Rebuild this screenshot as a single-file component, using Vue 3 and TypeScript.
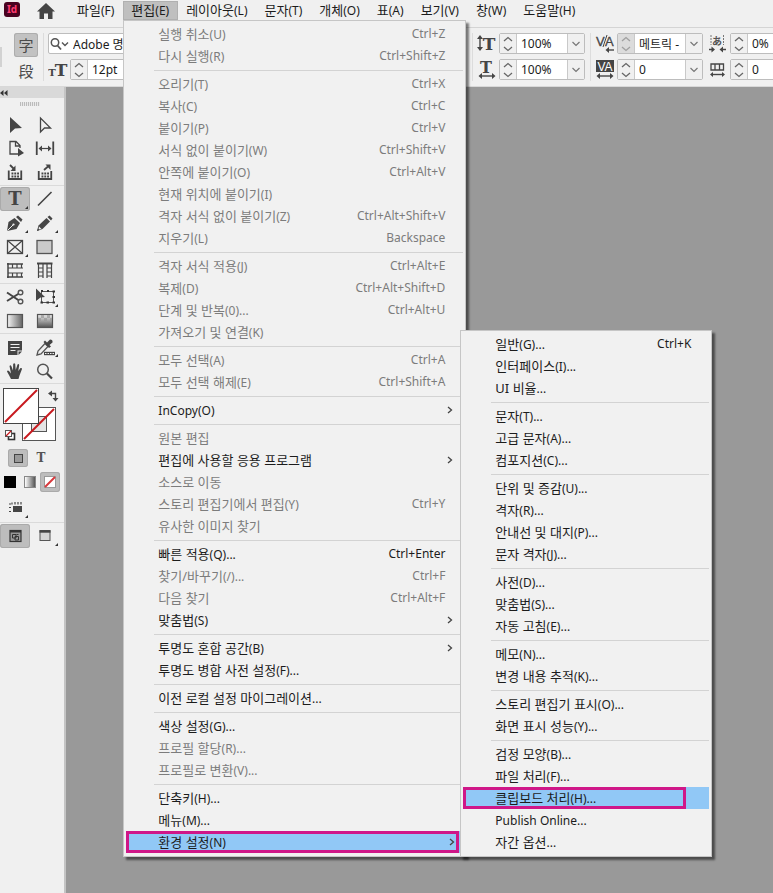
<script setup lang="ts">
interface MenuItem {
  label: string
  tail?: string
  keys?: string
  off?: boolean
  sub?: boolean
  active?: boolean
}

const on = (label: string, tail = '', keys = ''): MenuItem => ({ label, tail, keys })
const off = (label: string, tail = '', keys = ''): MenuItem => ({ label, tail, keys, off: true })
const parent = (label: string, tail = '', active = false): MenuItem => ({ label, tail, sub: true, active })

const editMenu: MenuItem[][] = [
  [off('실행 취소', '(U)', 'Ctrl+Z'), off('다시 실행', '(R)', 'Ctrl+Shift+Z')],
  [
    off('오리기', '(T)', 'Ctrl+X'),
    off('복사', '(C)', 'Ctrl+C'),
    off('붙이기', '(P)', 'Ctrl+V'),
    off('서식 없이 붙이기', '(W)', 'Ctrl+Shift+V'),
    off('안쪽에 붙이기', '(O)', 'Ctrl+Alt+V'),
    off('현재 위치에 붙이기', '(I)'),
    off('격자 서식 없이 붙이기', '(Z)', 'Ctrl+Alt+Shift+V'),
    off('지우기', '(L)', 'Backspace'),
  ],
  [
    off('격자 서식 적용', '(J)', 'Ctrl+Alt+E'),
    off('복제', '(D)', 'Ctrl+Alt+Shift+D'),
    off('단계 및 반복', '(0)...', 'Ctrl+Alt+U'),
    off('가져오기 및 연결', '(K)'),
  ],
  [off('모두 선택', '(A)', 'Ctrl+A'), off('모두 선택 해제', '(E)', 'Ctrl+Shift+A')],
  [parent('', 'InCopy(O)')],
  [
    off('원본 편집'),
    parent('편집에 사용할 응용 프로그램'),
    off('소스로 이동'),
    off('스토리 편집기에서 편집', '(Y)', 'Ctrl+Y'),
    off('유사한 이미지 찾기'),
  ],
  [
    on('빠른 적용', '(Q)...', 'Ctrl+Enter'),
    off('찾기/바꾸기', '(/)...', 'Ctrl+F'),
    off('다음 찾기', '', 'Ctrl+Alt+F'),
    parent('맞춤법', '(S)'),
  ],
  [parent('투명도 혼합 공간', '(B)'), on('투명도 병합 사전 설정', '(F)...')],
  [on('이전 로컬 설정 마이그레이션', '...')],
  [on('색상 설정', '(G)...'), off('프로필 할당', '(R)...'), off('프로필로 변환', '(V)...')],
  [on('단축키', '(H)...'), on('메뉴', '(M)...'), parent('환경 설정', '(N)', true)],
]

const prefsMenu: MenuItem[][] = [
  [on('일반', '(G)...', 'Ctrl+K'), on('인터페이스', '(I)...'), on('UI 비율', '...')],
  [on('문자', '(T)...'), on('고급 문자', '(A)...'), on('컴포지션', '(C)...')],
  [on('단위 및 증감', '(U)...'), on('격자', '(R)...'), on('안내선 및 대지', '(P)...'), on('문자 격자', '(J)...')],
  [on('사전', '(D)...'), on('맞춤법', '(S)...'), on('자동 고침', '(E)...')],
  [on('메모', '(N)...'), on('변경 내용 추적', '(K)...')],
  [on('스토리 편집기 표시', '(O)...'), on('화면 표시 성능', '(Y)...')],
  [
    on('검정 모양', '(B)...'),
    on('파일 처리', '(F)...'),
    { label: '클립보드 처리', tail: '(H)...', active: true },
    on('', 'Publish Online...'),
    on('자간 옵션', '...'),
  ],
]

const menusBefore = [{ label: '파일', key: '(F)' }]
const menusAfter = [
  { label: '레이아웃', key: '(L)' },
  { label: '문자', key: '(T)' },
  { label: '개체', key: '(O)' },
  { label: '표', key: '(A)' },
  { label: '보기', key: '(V)' },
  { label: '창', key: '(W)' },
  { label: '도움말', key: '(H)' },
]

interface Tool {
  name: string
  art: string
  more?: boolean
  active?: boolean
}

const letterT = (x: number, y: number, size: number) =>
  `<text x="${x}" y="${y}" font-family="DejaVu Serif, serif" font-weight="700" font-size="${size}" text-anchor="middle" fill="#454545">T</text>`

const toolGroups: Tool[][] = [
  [
    { name: '선택 도구', art: '<path d="M10 4L22 15L15 15.5L10 20Z" fill="#454545"/>' },
    { name: '직접 선택 도구', art: '<path d="M10.5 5V19L14.5 15H20.5Z" fill="none" stroke="#454545" stroke-width="1.3"/>' },
    {
      name: '페이지 도구',
      art: '<path d="M18 17H10V4.500H16L20 8.500V11M15.500 5V9H20" fill="none" stroke="#454545" stroke-width="1.300"/><path d="M18 11L24 16L18 19.500Z" fill="#454545"/>',
    },
    {
      name: '간격 도구',
      art: '<path d="M6.750 4.500V18M23.250 4.500V18" stroke="#454545" stroke-width="1.800"/><path d="M10 11.500H20" stroke="#454545" stroke-width="1.200"/><path d="M8.500 11.500L12 8.500V14.500ZM21.500 11.500L18 8.500V14.500Z" fill="#454545"/>',
    },
    {
      name: '내용 수집 도구',
      art: '<path d="M8.750 9.500V18H21.250V9.500" fill="none" stroke="#454545" stroke-width="1.800"/><path d="M11.500 12.500H19M11.500 15.500H19" stroke="#454545" stroke-width="1.800" stroke-dasharray="1.900 .9"/><path d="M10 4L13.500 7.500" stroke="#454545" stroke-width="1.800"/><path d="M15.500 4.500V10H10.500Z" fill="#454545"/>',
    },
    {
      name: '내용 배치 도구',
      art: '<path d="M8.750 10V18H21.250V10" fill="none" stroke="#454545" stroke-width="1.800"/><path d="M11.500 12.500H19M11.500 15.500H19" stroke="#454545" stroke-width="1.800" stroke-dasharray="1.900 .9"/><path d="M14 9L18 5.500" stroke="#454545" stroke-width="1.800"/><path d="M15.500 3.500H20.500V9Z" fill="#454545"/>',
    },
  ],
  [
    { name: '문자 도구', art: letterT(15, 18, 18), more: true, active: true },
    { name: '선 도구', art: '<path d="M8 18.500L21.500 5" stroke="#454545" stroke-width="1.600"/>' },
    {
      name: '펜 도구',
      art: '<path d="M7 20L8.500 11L14.500 7L20 12L16.500 18Z" fill="#454545"/><path d="M16 6L18 4.500L22.500 8.500L21 11Z" fill="#454545"/><path d="M7.500 19.500L13 14" stroke="#efefef" stroke-width="1"/><circle cx="13.500" cy="13.500" r="1.100" fill="#efefef"/>',
      more: true,
    },
    {
      name: '연필 도구',
      art: '<path d="M7 20L8.500 14.500L16.500 7L20 10.500L12.500 18Z" fill="#454545"/><path d="M17.500 6L19.500 4.500L22.500 7.500L21 9.500Z" fill="#454545"/><path d="M9 15.500L11.500 18L8.500 18.500Z" fill="#efefef"/><path d="M7 20L8 17.500L9.500 19Z" fill="#454545"/>',
      more: true,
    },
    {
      name: '사각형 프레임 도구',
      art: '<rect x="7.500" y="5.500" width="15" height="13" fill="none" stroke="#454545" stroke-width="1.300"/><path d="M7.500 5.500L22.500 18.500M22.500 5.500L7.500 18.500" stroke="#454545" stroke-width="1.200"/>',
      more: true,
    },
    { name: '사각형 도구', art: '<rect x="7" y="5.500" width="15" height="13" fill="#cbcbcb" stroke="#555" stroke-width="1.300"/>', more: true },
    {
      name: '가로 격자 도구',
      art: '<path d="M8 4V19M7 5H23M7 18H23" stroke="#454545" stroke-width="1.500" fill="none"/><path d="M8 9H23M8 14H23M12.500 5V9M17 5V9M21.500 5V9M12.500 14V18M17 14V18M21.500 14V18" stroke="#454545" stroke-width="1.200"/>',
    },
    {
      name: '세로 격자 도구',
      art: '<path d="M7 4.500H22.500" stroke="#454545" stroke-width="2"/><path d="M8.500 5V19M13 5V19M17 5V19M21.500 5V19M8.500 9H13M8.500 13H13M8.500 17H13M17 9H21.500M17 13H21.500M17 17H21.500" stroke="#454545" stroke-width="1.200"/>',
    },
  ],
  [
    {
      name: '가위 도구',
      art: '<path d="M7 7.500L19 15.500M7 16L19 8.500" stroke="#454545" stroke-width="2"/><circle cx="20.500" cy="7.500" r="2.300" fill="none" stroke="#555" stroke-width="1.400"/><circle cx="20.500" cy="16.500" r="2.300" fill="none" stroke="#555" stroke-width="1.400"/>',
    },
    {
      name: '자유 변형 도구',
      art: '<rect x="11.500" y="6.500" width="12" height="11" fill="none" stroke="#555" stroke-width="1"/><path d="M6 3.500L15 12L10.500 12.500L6 16Z" fill="#454545"/><path d="M11 6H13M17 6H19M22.500 6.500H25M22.500 12H25M10.500 17.500H13M16.500 17.500H19M22.500 17.500H25" stroke="#333" stroke-width="2"/>',
      more: true,
    },
    {
      name: '그레이디언트 색상 견본 도구',
      art: '<defs><linearGradient id="swatchFade"><stop offset="0" stop-color="#f4f4f4"/><stop offset="1" stop-color="#666"/></linearGradient></defs><rect x="7.500" y="5.500" width="15" height="13" fill="url(#swatchFade)" stroke="#555" stroke-width="1.200"/>',
    },
    {
      name: '그레이디언트 페더 도구',
      art: '<defs><linearGradient id="featherFade" x1="0" y1="0" x2="0" y2="1"><stop offset="0" stop-color="#eee"/><stop offset="1" stop-color="#555"/></linearGradient></defs><rect x="7.500" y="5.500" width="15" height="13" fill="url(#featherFade)" stroke="#555" stroke-width="1.200"/><path d="M11 6H14V9H11ZM17 6H20V9H17ZM8 9H11V12H8ZM14 9H17V12H14ZM20 9H22V12H20Z" fill="#999" opacity=".7"/>',
    },
  ],
  [
    {
      name: '메모 도구',
      art: '<path d="M8 6H22V15.500H17.500V20H8Z" fill="#454545"/><path d="M18.500 16.500H22L18.500 20Z" fill="#454545"/><path d="M10.500 9.500H19.500M10.500 12.500H19.500M10.500 15.500H15.500" stroke="#efefef" stroke-width="1"/>',
    },
    {
      name: '스포이드 도구',
      art: '<path d="M7 20L8 16L15 8.500L18 11.500L11 19Z" fill="#efefef" stroke="#555" stroke-width="1.300"/><path d="M13.500 7L15 5.500L17 7.500L20 4.500Q23 4.500 22.500 7.500L19.500 10L21 11.500L19 13Z" fill="#454545"/><path d="M14 18.500H25" stroke="#454545" stroke-width="3.400"/><path d="M15 18.500H24" stroke="#efefef" stroke-width="1" stroke-dasharray="1.500 1"/>',
      more: true,
    },
    {
      name: '손 도구',
      art: '<path d="M11 20Q9 16 7 12.500Q7.500 11 9 12L11 14.500L9.500 7Q10.500 5.500 11.300 7L13 11.500L13.200 5Q14.200 3.500 15.200 5L15.700 11L17.500 5.500Q18.800 4.500 19.200 6L18.300 12L20.500 9Q22 8.500 22 10L19.500 16.500L18.500 20Z" fill="#454545"/>',
    },
    {
      name: '돋보기 도구',
      art: '<circle cx="13" cy="10.500" r="5.300" fill="none" stroke="#555" stroke-width="1.500"/><path d="M17 14.500L22 19.500" stroke="#454545" stroke-width="2.200"/>',
    },
  ],
]

interface Field {
  icon: string
  value: string
  name: string
  dim?: boolean
}

const arrowsH = (y: number) =>
  `<path d="M3 ${y}H17" stroke="#454545" stroke-width="1.400"/><path d="M1.500 ${y}L5 ${y - 3}V${y + 3}ZM18.500 ${y}L15 ${y - 3}V${y + 3}Z" fill="#454545"/>`

const scaleFields: Field[] = [
  {
    name: '세로 비율',
    value: '100%',
    icon: `${letterT(12, 17, 17)}<path d="M3 4V16" stroke="#454545" stroke-width="1.400"/><path d="M3 2L0 6H6ZM3 18L0 14H6Z" fill="#454545"/>`,
  },
  { name: '가로 비율', value: '100%', icon: `${letterT(9, 13.5, 16)}${arrowsH(17)}` },
]
const kernFields: Field[] = [
  {
    name: '커닝',
    value: '메트릭 -',
    dim: true,
    icon: '<text x="1" y="13" font-family="Liberation Sans, sans-serif" font-size="13" fill="#454545" stroke="#454545" stroke-width=".3">V</text><text x="10" y="13" font-family="Liberation Sans, sans-serif" font-size="13" fill="#454545" stroke="#454545" stroke-width=".3">A</text><path d="M8 14L12 2" stroke="#454545" stroke-width="1"/><path d="M12 17H19" stroke="#454545" stroke-width="1.400"/><path d="M10.500 17L14 14V20Z" fill="#454545"/>',
  },
  {
    name: '자간',
    value: '0',
    icon: `<rect x="1" y="1" width="18" height="12" fill="#454545"/><text x="10" y="11.500" text-anchor="middle" font-family="Liberation Sans, sans-serif" font-size="12" fill="#fff">VA</text>${arrowsH(17)}`,
  },
]
const gridFields: Field[] = [
  {
    name: '문자 간격 비율',
    value: '0%',
    icon: '<text x="9" y="12" text-anchor="middle" font-family="Noto Sans CJK JP, sans-serif" font-size="10" font-weight="700" fill="#555">あ</text><path d="M3 2V12M15.500 2V12" stroke="#777" stroke-width="1" stroke-dasharray="2 1"/><path d="M1 16.500H4M14.500 16.500H18" stroke="#454545" stroke-width="1.400"/><path d="M7 16.500L3.500 13.500V19.500ZM11.500 16.500L15 13.500V19.500Z" fill="#454545"/>',
  },
  {
    name: '격자 간격',
    value: '0',
    icon: '<path d="M3 5H15.500V11H3ZM7 5V11M11.500 5V11" fill="none" stroke="#454545" stroke-width="1.300"/><path d="M4 15.500H15" stroke="#454545" stroke-width="1.400"/><path d="M2 15.500L5 13V18ZM17 15.500L14 13V18Z" fill="#454545"/>',
  },
]
const fieldGroups = [
  { id: 'scale', fields: scaleFields, drop: true },
  { id: 'kern', fields: kernFields, drop: true },
  { id: 'grid', fields: gridFields, drop: false },
]
</script>

<template>
  <div class="window">
    <header class="menubar">
      <span class="logo">Id</span>
      <a class="home" href="#" aria-label="홈">
        <svg width="20" height="18" viewBox="0 0 20 18"><path d="M10 1L19 9.500H16.500V17H12V11.500H8V17H3.500V9.500H1Z" fill="#454545" /></svg>
      </a>
      <nav class="menus">
        <button v-for="m in menusBefore" :key="m.label" class="menu-title">{{ m.label }}<small>{{ m.key }}</small></button>
        <div class="open">
          <button class="menu-title selected" aria-expanded="true">편집<small>(E)</small></button>
          <div class="popup edit">
            <ul v-for="(group, g) in editMenu" :key="g">
              <li v-for="item in group" :key="item.label">
                <button class="item" :class="{ active: item.active, marked: item.active }" :disabled="item.off">
                  <span>{{ item.label }}<small>{{ item.tail }}</small></span>
                  <kbd v-if="item.keys">{{ item.keys }}</kbd>
                  <svg v-if="item.sub" class="chev" width="6" height="8" viewBox="0 0 6 8"><path d="M1 1L4.500 4L1 7" fill="none" stroke="#444" stroke-width="1.300" /></svg>
                </button>
              </li>
            </ul>
            <div class="popup prefs">
              <ul v-for="(group, g) in prefsMenu" :key="g">
                <li v-for="item in group" :key="item.label">
                  <button class="item" :class="{ active: item.active, marked: item.active }">
                    <span>{{ item.label }}<small>{{ item.tail }}</small></span>
                    <kbd v-if="item.keys">{{ item.keys }}</kbd>
                  </button>
                </li>
              </ul>
            </div>
          </div>
        </div>
        <button v-for="m in menusAfter" :key="m.label" class="menu-title">{{ m.label }}<small>{{ m.key }}</small></button>
      </nav>
    </header>

    <section class="controls">
      <span class="dock"></span>
      <div class="modes">
        <button class="mode selected">字</button>
        <button class="mode">段</button>
      </div>
      <div class="group font">
        <label class="field search">
          <svg width="20" height="14" viewBox="0 0 20 14"><circle cx="6" cy="5.500" r="3.700" fill="none" stroke="#555" stroke-width="1.500" /><path d="M8.500 8.500L12 12.500" stroke="#555" stroke-width="1.800" /><path d="M13 5.500L16 8.500L19 5.500" fill="none" stroke="#555" stroke-width="1.400" /></svg>
          <input type="text" value="Adobe 명조" aria-label="글꼴" />
        </label>
        <div class="line">
          <svg class="icon" width="20" height="20" viewBox="0 0 20 20">
            <text x="4" y="17" text-anchor="middle" font-family="DejaVu Serif, serif" font-weight="700" font-size="10" fill="#454545">T</text>
            <text x="13" y="17" text-anchor="middle" font-family="DejaVu Serif, serif" font-weight="700" font-size="17" fill="#454545">T</text>
          </svg>
          <label class="field">
            <span class="spin"><svg width="10" height="16" viewBox="0 0 10 16"><path d="M1 5L5 1.500L9 5M1 11L5 14.500L9 11" fill="none" stroke="#666" stroke-width="1.300" /></svg></span>
            <input type="text" value="12pt" aria-label="글꼴 크기" />
          </label>
        </div>
      </div>
      <div v-for="g in fieldGroups" :key="g.id" class="group" :class="g.id">
        <div v-for="f in g.fields" :key="f.name" class="line">
          <svg class="icon" width="20" height="20" viewBox="0 0 20 20" v-html="f.icon"></svg>
          <label class="field">
            <span class="spin" :class="{ dim: f.dim }"><svg width="10" height="16" viewBox="0 0 10 16"><path d="M1 5L5 1.500L9 5M1 11L5 14.500L9 11" fill="none" stroke="#666" stroke-width="1.300" /></svg></span>
            <input type="text" :value="f.value" :aria-label="f.name" />
            <span v-if="g.drop" class="drop"><svg width="10" height="6" viewBox="0 0 10 6"><path d="M1.500 1L5 4.500L8.500 1" fill="none" stroke="#777" stroke-width="1.200" /></svg></span>
          </label>
        </div>
      </div>
    </section>

    <main class="body">
      <aside class="tools">
        <div class="collapse">
          <svg width="8" height="6" viewBox="0 0 8 6"><path d="M3.500 0V6L0 3ZM7.500 0V6L4 3Z" fill="#333" /></svg>
        </div>
        <div class="grip"><i></i></div>
        <div v-for="(group, g) in toolGroups" :key="g" class="tool-group">
          <button v-for="t in group" :key="t.name" class="tool" :class="{ selected: t.active, more: t.more }" :aria-label="t.name">
            <svg width="30" height="24" viewBox="0 0 30 24" v-html="t.art"></svg>
          </button>
        </div>
        <div class="colors">
          <svg width="62" height="62" viewBox="0 0 62 62">
            <rect x="22.500" y="23.500" width="33" height="33" fill="#fff" stroke="#555" />
            <rect x="31.500" y="32.500" width="15" height="15" fill="#e4e4e4" stroke="#555" />
            <path d="M24 55L54 25" stroke="#c8191e" stroke-width="2" />
            <rect x="3.500" y="4.500" width="35" height="35" fill="#fff" stroke="#444" />
            <path d="M5 38L37 6" stroke="#c8191e" stroke-width="2" />
            <path d="M50 9.500H55.500V15" fill="none" stroke="#454545" stroke-width="1.400" />
            <path d="M48 9.500L52 6.500V12.500ZM55.500 17.500L52.500 14H58.500Z" fill="#454545" />
            <rect x="8.500" y="49.500" width="6" height="6" fill="#fff" stroke="#333" stroke-width="1.600" />
            <rect x="5.500" y="46.500" width="6" height="6" fill="#fff" stroke="#555" />
            <path d="M6 52L11 47" stroke="#c8191e" stroke-width="1.200" />
          </svg>
        </div>
        <div class="targets">
          <button class="target selected" aria-label="컨테이너에 서식 적용"><i class="square"></i></button>
          <button class="target letter" aria-label="텍스트에 서식 적용">T</button>
        </div>
        <div class="fills">
          <button class="fill" aria-label="색상 적용"><i class="solid"></i></button>
          <button class="fill" aria-label="그레이디언트 적용"><i class="fade"></i></button>
          <button class="fill selected" aria-label="적용 안 함">
            <svg width="12" height="12" viewBox="0 0 12 12"><rect x=".5" y=".5" width="11" height="11" fill="#fff" stroke="#999" /><path d="M1 11L11 1" stroke="#d8383c" stroke-width="2" /></svg>
          </button>
        </div>
        <div class="options">
          <button class="tool more" aria-label="보기 옵션">
            <svg width="30" height="24" viewBox="0 0 30 24"><rect x="13" y="10" width="9" height="6" fill="#454545" /><path d="M9 8H11M12 6.500V8.500M15 6V8.500M18 6V8.500M21 6V8.500M9 11.500H11M9 15.500H11" stroke="#454545" stroke-width="1.200" /></svg>
          </button>
        </div>
        <div class="tool-group screen">
          <button class="tool selected" aria-label="표준 화면">
            <svg width="30" height="24" viewBox="0 0 30 24"><rect x="10" y="6.500" width="11" height="11" fill="#999" stroke="#333" stroke-width="1.200" /><path d="M10 7.500H21" stroke="#333" stroke-width="2" /><path d="M12.500 10.500H16V14H12.500ZM15 12.500H18.500V16H15ZM16.500 10.500H18.500" fill="none" stroke="#333" /></svg>
          </button>
          <button class="tool more" aria-label="화면 모드">
            <svg width="30" height="24" viewBox="0 0 30 24"><rect x="10" y="6.500" width="10" height="10" fill="#d5d5d5" stroke="#555" /><path d="M9.500 7.500H20.500" stroke="#454545" stroke-width="2.400" /></svg>
          </button>
        </div>
      </aside>
      <div class="canvas"></div>
    </main>
  </div>
</template>

<style>
body {
  margin: 0;
  background: #999;
}
</style>

<style scoped>
* {
  box-sizing: border-box;
}
.window {
  display: flex;
  flex-direction: column;
  min-height: 100vh;
  overflow: hidden;
  background: #f0f0f0;
  color: #1c1c1c;
  font-family: "Noto Sans", "Noto Sans CJK KR", sans-serif;
  font-size: 13px;
}
button,
input,
kbd {
  font: inherit;
  color: inherit;
}
button {
  margin: 0;
  padding: 0;
  border: 0;
  background: none;
}
small {
  font-size: 12px;
}
svg {
  display: block;
  flex: none;
}
ul {
  margin: 0;
  padding: 0;
  list-style: none;
}

/* Menu bar */
.menubar {
  display: flex;
  align-items: flex-start;
  height: 28px;
  border-bottom: 1px solid #d4d4d4;
}
.logo {
  width: 16px;
  height: 15px;
  margin: 2px 0 0 4px;
  border-radius: 3px;
  background: #49021f;
  color: #ff3b70;
  font-size: 10px;
  font-weight: 700;
  line-height: 15px;
  text-align: center;
}
.home {
  margin: 2px 13px 0 16px;
}
.menus {
  display: flex;
  padding-top: 1px;
}
.menu-title {
  height: 19px;
  padding: 0 9px 0 8px;
  line-height: 19px;
  white-space: nowrap;
}
.menu-title.selected {
  background: #bfbfbf;
  box-shadow: inset 0 0 0 1px #b0b0b0;
}
.open {
  position: relative;
}

/* Popup menus */
.popup {
  position: absolute;
  z-index: 2;
  padding: 2px 2px 3px;
  border: 1px solid #c6c6c6;
  background: #f1f1f1;
  box-shadow: 3px 3px 2px rgba(0, 0, 0, 0.5);
}
.edit {
  top: 100%;
  left: 0;
  width: 343px;
}
.prefs {
  left: 336px;
  bottom: -1px;
  width: 252px;
}
.popup ul + ul {
  position: relative;
  padding-top: 6px;
}
.popup ul + ul::before {
  content: "";
  position: absolute;
  top: 3px;
  right: 0;
  left: 28px;
  border-top: 1px solid #d3d3d3;
}
.item {
  position: relative;
  display: flex;
  justify-content: space-between;
  align-items: center;
  width: 100%;
  height: 22px;
  padding: 0 18px 0 32px;
  line-height: 22px;
  text-align: left;
  white-space: nowrap;
}
.item:disabled {
  color: #7c7c7c;
}
.item kbd {
  font-size: 12px;
}
.item.active {
  background: #91c8f6;
}
.edit > ul .chev {
  margin-right: -8px;
}
.edit > ul .item.active {
  width: 334px;
  padding-right: 13px;
}
.item.marked::after {
  content: "";
  position: absolute;
  inset: 0 1px 0 0;
  border: 3px solid #cf1788;
}
.prefs .item.marked::after {
  right: 23px;
}

/* Control strip */
.controls {
  display: flex;
  height: 59px;
  border-bottom: 1px solid #d8d8d8;
}
.dock {
  width: 2px;
  height: 20px;
  margin-top: 19px;
  background: #d2d2d2;
}
.modes {
  display: flex;
  flex-direction: column;
  gap: 2px;
  padding: 5px 5px 0 12px;
}
.dock,
.modes {
  flex: none;
}
.mode {
  width: 24px;
  height: 24px;
  border-radius: 3px;
  color: #4a4a4a;
  font-family: "Noto Sans CJK KR", sans-serif;
  font-size: 15px;
  line-height: 22px;
}
.mode.selected {
  background: #c2c2c2;
  box-shadow: inset 0 0 0 1px #adadad;
}
.group {
  display: flex;
  flex-direction: column;
  gap: 5px;
  height: 48px;
  margin-top: 5px;
  padding-left: 4px;
  border-left: 1px solid #dcdcdc;
}
.font {
  flex: none;
  width: 429px;
  padding-right: 12px;
}
.scale,
.kern {
  flex: none;
  width: 118px;
}
.grid {
  flex: 1;
  min-width: 80px;
  border-left: 0;
  padding-left: 0;
}
.line {
  display: flex;
  gap: 2px;
  height: 21px;
}
.field {
  display: flex;
  flex: 1;
  align-items: stretch;
  min-width: 0;
  height: 21px;
  border: 1px solid #bdbdbd;
  border-radius: 2px;
  background: #fff;
}
.search {
  flex: none;
  align-items: center;
}
.field input {
  flex: 1;
  width: 0;
  min-width: 0;
  padding: 0 0 0 4px;
  border: 0;
  outline: 0;
  background: none;
  font-size: 12px;
}
.scale .line,
.kern .line {
  padding-right: 5px;
}
.spin,
.drop {
  display: flex;
  flex: none;
  align-items: center;
  justify-content: center;
  width: 17px;
  background: #f0f0f0;
}
.spin {
  border-right: 1px solid #c9c9c9;
}
.spin.dim {
  background: #dcdcdc;
}
.spin.dim svg {
  opacity: 0.5;
}
.drop {
  border-left: 1px solid #c9c9c9;
}

/* Tool panel and canvas */
.body {
  display: flex;
  flex: 1;
}
.tools {
  flex: none;
  width: 66px;
  border-right: 2px solid #c4c4c4;
}
.canvas {
  flex: 1;
  background: #999;
}
.collapse {
  display: flex;
  align-items: center;
  height: 11px;
  background: #d9d9d9;
}
.grip {
  display: flex;
  height: 15px;
  padding: 4px 0 0 20px;
}
.grip i {
  width: 20px;
  height: 4px;
  background: repeating-linear-gradient(90deg, #bbb 0 1px, #e8e8e8 1px 2px);
}
.tool-group {
  display: grid;
  grid-template-columns: 30px 30px;
}
.tool-group + .tool-group,
.screen {
  padding-top: 1px;
  border-top: 1px solid #dadada;
}
.tool {
  position: relative;
  width: 30px;
  height: 24px;
  border-radius: 3px;
}
.tool.selected,
.target.selected,
.fill.selected {
  background: #bdbdbd;
  box-shadow: inset 0 0 0 1px #aaa;
}
.tool.more::after {
  content: "";
  position: absolute;
  right: 2px;
  bottom: 2px;
  border-bottom: 3px solid #333;
  border-left: 3px solid transparent;
}
.colors {
  border-top: 1px solid #dadada;
}
.targets {
  display: flex;
  align-items: center;
  gap: 3px;
  height: 24px;
  padding-left: 8px;
}
.target {
  display: flex;
  align-items: center;
  justify-content: center;
  width: 20px;
  height: 18px;
  border-radius: 3px;
}
.square {
  width: 9px;
  height: 9px;
  border: 1px solid #444;
  background: #999;
}
.letter {
  color: #555;
  font-family: "DejaVu Serif", serif;
  font-size: 12px;
  font-weight: 700;
}
.fills {
  display: flex;
  align-items: center;
  height: 24px;
}
.fill {
  display: flex;
  align-items: center;
  justify-content: center;
  width: 20px;
  height: 20px;
  border-radius: 3px;
}
.solid,
.fade {
  width: 12px;
  height: 12px;
}
.solid {
  background: #000;
}
.fade {
  border: 1px solid #888;
  background: linear-gradient(90deg, #fff, #555);
}
.options {
  height: 28px;
  padding-top: 2px;
}
</style>
